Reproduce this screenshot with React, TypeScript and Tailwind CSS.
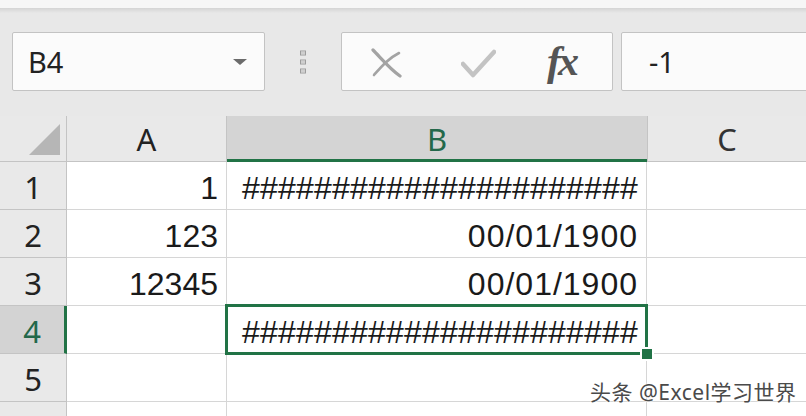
import React from "react";

const GRID = "border-[#d6d6d6]";

function Hash() {
  return <span className="tracking-[0.2px]">{"######################"}</span>;
}

function DateTxt() {
  return <span className="tracking-[1px]">00/01/1900</span>;
}

export default function App() {
  const rows = [
    { n: "1", a: "1", b: <Hash />, sel: false },
    { n: "2", a: "123", b: <DateTxt />, sel: false },
    { n: "3", a: "12345", b: <DateTxt />, sel: false },
    { n: "4", a: "", b: <Hash />, sel: true },
    { n: "5", a: "", b: "", sel: false },
    { n: "", a: "", b: "", sel: false },
  ];
  return (
    <div className="w-[806px] h-[416px] overflow-hidden bg-[#e8e8e8] flex flex-col relative font-['Liberation_Sans',sans-serif]">
      <div className="h-[8px] bg-[#f6f6f6] shrink-0" />
      <div className="h-[5px] bg-gradient-to-b from-[#d4d4d4] to-[#e8e8e8] shrink-0" />
      {/* toolbar */}
      <div className="h-[103px] shrink-0 flex items-start pt-[19px]">
        <div className="ml-[12px] w-[253px] h-[59px] bg-[#fbfbfb] border border-[#c3c3c3] rounded-[2px] flex items-center pl-[15px] pr-[17px] shrink-0">
          <span className="flex-1 text-[29px] text-[#222] font-['Noto_Sans',sans-serif] leading-none">B4</span>
          <svg width="14" height="6" viewBox="0 0 14 6">
            <path d="M0 0 L14 0 L7 6 Z" fill="#6b6b6b" />
          </svg>
        </div>
        <div className="w-[76px] h-[59px] flex items-center justify-center shrink-0">
          <svg width="8" height="26" viewBox="0 0 8 26">
            {[2, 11, 20].map((y) => (
              <g key={y}>
                <rect x="1.5" y={y} width="5" height="4" fill="none" stroke="#9c9c9c" strokeWidth="1" />
                <line x1="2" y1={y + 2} x2="6" y2={y + 2} stroke="#b5b5b5" strokeWidth="1" />
              </g>
            ))}
          </svg>
        </div>
        <div className="w-[272px] h-[59px] bg-[#fbfbfb] border border-[#c3c3c3] rounded-[2px] flex items-center shrink-0 relative">
          <svg className="absolute left-[29px] top-[15px]" width="32" height="30" viewBox="0 0 32 30">
            <path d="M2 2 C10 10 18 20 29 28" stroke="#a3a3a3" strokeWidth="3.2" fill="none" strokeLinecap="round" />
            <path d="M3 27 C11 18 18 10 28 5" stroke="#a3a3a3" strokeWidth="2.6" fill="none" strokeLinecap="round" />
          </svg>
          <svg className="absolute left-[119px] top-[16px]" width="35" height="29" viewBox="0 0 35 29">
            <path d="M2 15 L12 26 L33 3" stroke="#c3c3c3" strokeWidth="4.5" fill="none" strokeLinejoin="round" strokeLinecap="round" />
          </svg>
          <span className="absolute left-[205px] top-[7px] text-[42px] italic text-[#555] leading-none font-['Liberation_Serif',serif] font-bold tracking-[-3px]">
            fx
          </span>
        </div>
        <div className="ml-[8px] flex-1 h-[59px] bg-[#fbfbfb] border border-[#c3c3c3] rounded-[2px] mr-[-6px] flex items-center pl-[27px]">
          <span className="text-[29px] text-[#222] font-['Noto_Sans',sans-serif] leading-none">-1</span>
        </div>
      </div>
      {/* grid */}
      <div className="grid grid-cols-[67px_160px_420px_1fr] grid-rows-[46px_repeat(6,48px)] bg-white text-[32px] text-[#1a1a1a] leading-none">
        {/* header row */}
        <div className="bg-[#e9e9e9] border-r border-b border-[#c4c4c4] relative">
          <svg className="absolute left-[29px] top-[8px]" width="32" height="31" viewBox="0 0 32 31">
            <path d="M31 0 L31 31 L0 31 Z" fill="#b6b6b6" />
          </svg>
        </div>
        <div className="bg-[#e9e9e9] border-r border-b border-[#c4c4c4] flex items-center justify-center pt-[2px] font-['Noto_Sans',sans-serif] text-[31px] text-[#222]">
          A
        </div>
        <div className="bg-[#d4d4d4] border-b-[3px] border-[#217346] flex items-center justify-center pt-[3px] font-['Noto_Sans',sans-serif] text-[31px] text-[#23684a]">
          B
        </div>
        <div className="bg-[#e9e9e9] border-b border-l border-[#c4c4c4] flex items-center justify-center pt-[2px] font-['Noto_Sans',sans-serif] text-[31px] text-[#333]">
          C
        </div>
        {rows.map((r, i) => (
          <React.Fragment key={i}>
            <div
              className={
                r.sel
                  ? "bg-[#d3d3d3] border-b border-[#c4c4c4] border-r-[3px] border-r-[#217346] flex items-center justify-center pt-[3px] font-['Noto_Sans',sans-serif] text-[31px] text-[#23684a]"
                  : "bg-[#e9e9e9] border-b border-r border-[#c4c4c4] flex items-center justify-center pt-[3px] font-['Noto_Sans',sans-serif] text-[31px] text-[#222]"
              }
            >
              {r.n}
            </div>
            <div className={`border-r border-b ${GRID} flex items-center justify-end pr-[8px] pt-[4px]`}>{r.a}</div>
            <div className={`border-r border-b ${GRID} flex items-center justify-end pr-[8px] pt-[4px] ${r.sel ? "relative z-10" : ""}`}>
              {r.b}
              {r.sel && (
                <>
                  <div className="absolute left-[-2px] top-[-2px] right-[-2px] bottom-[-2px] border-[3px] border-[#217346]" />
                  <div className="absolute right-[-8px] bottom-[-8px] w-[14px] h-[14px] bg-[#217346] border-[2px] border-[#ffffff] box-border" />
                </>
              )}
            </div>
            <div className={`border-b ${GRID}`} />
          </React.Fragment>
        ))}
      </div>
      <div className="absolute left-[590px] top-[382px] text-[21px] tracking-[0.5px] leading-none text-[#4a4a4a] font-['Noto_Sans','Noto_Sans_CJK_SC',sans-serif] [text-shadow:0_0_2px_#ffffff,0_0_2px_#ffffff]">
        头条 @Excel学习世界
      </div>
    </div>
  );
}
